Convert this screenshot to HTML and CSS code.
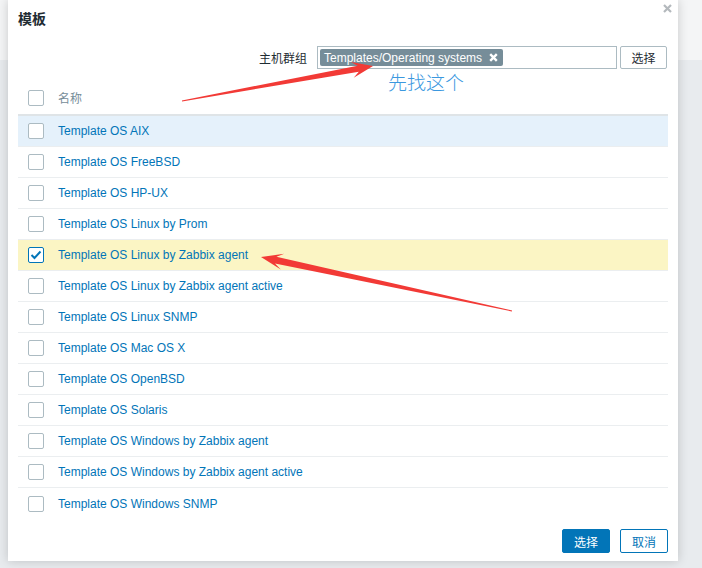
FILE: index.html
```html
<!DOCTYPE html>
<html lang="zh">
<head>
<meta charset="utf-8">
<title>模板</title>
<link rel="stylesheet" href="styles.css">
</head>
<body>
<div class="modal">
  <div class="head">
    <h4 class="title">模板</h4>
    <svg class="close" width="9" height="9" viewBox="0 0 9 9"><path d="M1 1L8 8M8 1L1 8" stroke="#b4b9bd" stroke-width="2.2"/></svg>
  </div>
  <div class="filter">
    <span class="label">主机群组</span>
    <div class="ms">
      <span class="tag">Templates/Operating systems
        <svg class="tag-x" width="9" height="9" viewBox="0 0 9 9"><path d="M1.2 1.2L7.8 7.8M7.8 1.2L1.2 7.8" stroke="#fff" stroke-width="2.4"/></svg>
      </span>
    </div>
    <button class="btn-alt">选择</button>
  </div>
  <div class="table">
    <div class="row hdr"><span class="cb"></span><span class="hname">名称</span></div>
    <div class="row hover"><span class="cb"></span><a class="link">Template OS AIX</a></div>
    <div class="row"><span class="cb"></span><a class="link">Template OS FreeBSD</a></div>
    <div class="row"><span class="cb"></span><a class="link">Template OS HP-UX</a></div>
    <div class="row"><span class="cb"></span><a class="link">Template OS Linux by Prom</a></div>
    <div class="row sel"><span class="cb on"><svg width="12" height="10" viewBox="0 0 12 10"><path d="M1.5 5L4.5 8L10.5 1.5" fill="none" stroke="#0275b8" stroke-width="2"/></svg></span><a class="link">Template OS Linux by Zabbix agent</a></div>
    <div class="row"><span class="cb"></span><a class="link">Template OS Linux by Zabbix agent active</a></div>
    <div class="row"><span class="cb"></span><a class="link">Template OS Linux SNMP</a></div>
    <div class="row"><span class="cb"></span><a class="link">Template OS Mac OS X</a></div>
    <div class="row"><span class="cb"></span><a class="link">Template OS OpenBSD</a></div>
    <div class="row"><span class="cb"></span><a class="link">Template OS Solaris</a></div>
    <div class="row"><span class="cb"></span><a class="link">Template OS Windows by Zabbix agent</a></div>
    <div class="row"><span class="cb"></span><a class="link">Template OS Windows by Zabbix agent active</a></div>
    <div class="row last"><span class="cb"></span><a class="link">Template OS Windows SNMP</a></div>
  </div>
  <div class="footer">
    <button class="btn-primary">选择</button>
    <button class="btn-outline">取消</button>
  </div>
</div>
<span class="note">先找这个</span>
<svg class="arrows" width="702" height="568" viewBox="0 0 702 568">
  <polygon fill="#f23a36" points="181.9,100.5 357.7,65.7 350.9,61.9 373,66 353.7,77.7 358.8,71.7 182.1,101.5"/>
  <polygon fill="#f23a36" points="512.1,310.5 276.4,256.8 284.2,253.8 261,257 280.8,269.4 275.0,263.6 511.9,311.5"/>
</svg>
</body>
</html>
```
FILE: styles.css
```css
html, body {
  margin: 0;
  padding: 0;
}
body {
  width: 702px;
  height: 568px;
  overflow: hidden;
  position: relative;
  background: linear-gradient(to bottom, #f4f5f6 0, #f4f5f6 60px, #e8ebee 60px, #e8ebee 100%);
  font-family: "Liberation Sans", Arial, "Noto Sans CJK SC", sans-serif;
  font-size: 12px;
  color: #1f2c33;
  padding-left: 8px;
  box-sizing: border-box;
}
.modal {
  position: relative;
  width: 670px;
  height: 561px;
  background: #fff;
  box-shadow: 0 0 10px rgba(0, 0, 0, 0.18);
  padding: 0 10px;
  box-sizing: border-box;
  display: flex;
  flex-direction: column;
}
.head {
  height: 36px;
  display: flex;
  align-items: center;
}
.title {
  margin: 0;
  font-size: 14px;
  font-weight: bold;
  color: #1f2c33;
  font-family: "Liberation Sans", "Noto Sans CJK SC", sans-serif;
}
.close {
  position: absolute;
  top: 4px;
  right: 6px;
}
.filter {
  margin-top: 10px;
  height: 23px;
  display: flex;
  justify-content: flex-end;
  align-items: center;
  padding-right: 1px;
}
.label {
  margin-right: 10px;
  color: #1f2c33;
  font-family: "Noto Sans CJK SC", sans-serif;
  font-size: 12px;
}
.ms {
  width: 300px;
  height: 23px;
  border: 1px solid #acbbc2;
  box-sizing: border-box;
  display: flex;
  align-items: center;
  padding-left: 2px;
}
.tag {
  height: 17px;
  background: #768d99;
  color: #fff;
  display: flex;
  align-items: center;
  padding: 0 5px 0 4px;
  font-size: 12px;
  border-radius: 2px;
}
.tag-x {
  margin-left: 7px;
}
button {
  font-family: "Noto Sans CJK SC", sans-serif;
  font-size: 12px;
  height: 24px;
  width: 48px;
  border-radius: 2px;
  padding: 0;
  box-sizing: border-box;
  cursor: pointer;
}
.btn-alt {
  height: 23px;
  width: 47px;
  margin-left: 3px;
  background: #fff;
  color: #1f2c33;
  border: 1px solid #acbbc2;
}
.table {
  margin-top: 13px;
  display: flex;
  flex-direction: column;
}
.row {
  height: 31px;
  box-sizing: border-box;
  border-bottom: 1px solid #ebeef0;
  display: flex;
  align-items: center;
  padding-left: 10px;
}
.row.hdr {
  height: 34px;
  padding-bottom: 1px;
  border-bottom: 2px solid #dfe4e7;
}
.row.last {
  border-bottom: none;
}
.row.hover {
  background: #e5f1fb;
}
.row.sel {
  background: #fbf5c4;
}
.cb {
  width: 16px;
  height: 16px;
  border: 1px solid #acbbc2;
  border-radius: 2px;
  box-sizing: border-box;
  background: #fff;
  margin-right: 14px;
  display: flex;
  align-items: center;
  justify-content: center;
}
.cb.on {
  border-color: #0275b8;
}
.hname {
  color: #768d99;
  font-family: "Noto Sans CJK SC", sans-serif;
}
.link {
  color: #0275b8;
  text-decoration: none;
}
.footer {
  margin-top: 10px;
  display: flex;
  justify-content: flex-end;
  gap: 10px;
}
.btn-primary {
  background: #0275b8;
  color: #fff;
  border: 1px solid #0275b8;
}
.btn-outline {
  background: #fff;
  color: #0275b8;
  border: 1px solid #0275b8;
}
.note {
  position: absolute;
  left: 388px;
  top: 69px;
  font-family: "Noto Sans CJK SC", sans-serif;
  font-size: 19px;
  color: #3b98df;
  line-height: 26px;
  font-weight: 300;
}
.arrows {
  position: absolute;
  left: 0;
  top: 0;
  pointer-events: none;
}
```
